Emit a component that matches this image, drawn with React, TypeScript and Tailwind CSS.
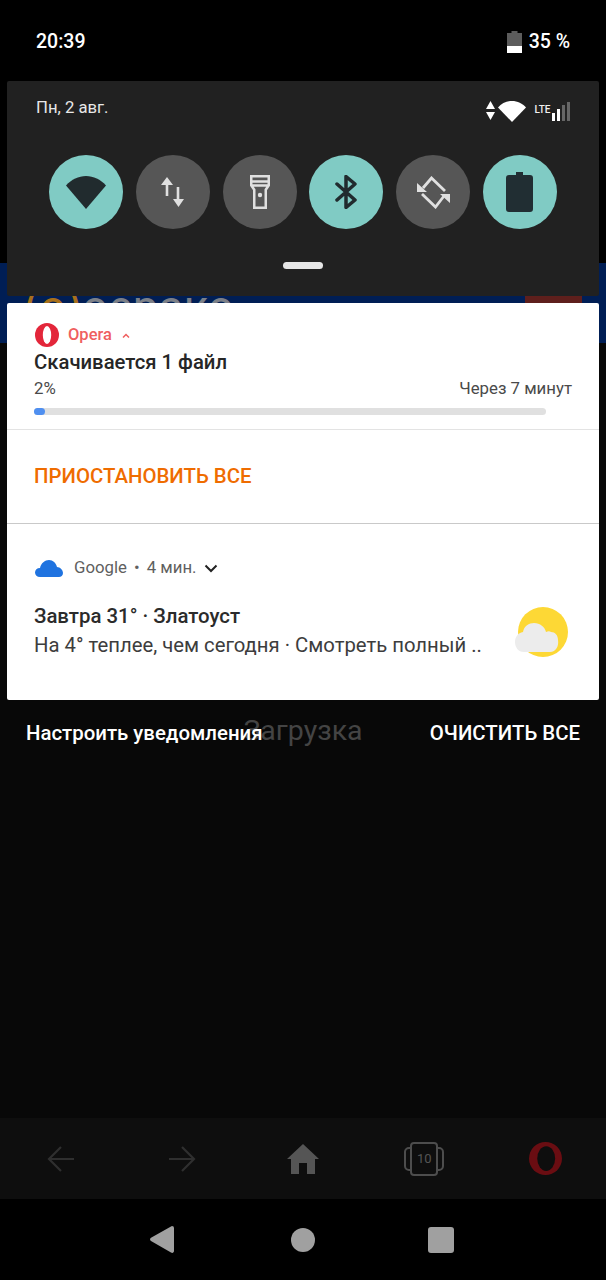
const font = { fontFamily: "Roboto, sans-serif" }

function OperaLogo({ className, color, hole, rx, cx }: { className: string; color: string; hole: string; rx: number; cx: number }) {
  return (
    <svg viewBox="0 0 24 24" className={className}>
      <ellipse cx="12" cy="12" rx="12" ry="12" fill={color} />
      <ellipse cx={cx} cy="12" rx={rx} ry="9" fill={hole} />
    </svg>
  )
}

function QuickTile({ on, children }: { on?: boolean; children: React.ReactNode }) {
  return (
    <div className={`flex h-[74px] w-[74px] items-center justify-center rounded-full ${on ? "bg-[#80cbc4]" : "bg-[#565656]"}`}>
      {children}
    </div>
  )
}

export default function App() {
  return (
    <div className="relative h-[1280px] w-[606px] overflow-hidden bg-black" style={font}>
      {/* app behind the shade */}
      <div className="absolute inset-0 flex flex-col bg-[#080808]">
        <div className="h-[263px] bg-black" />
        <div className="flex h-[80px] items-start justify-between overflow-hidden bg-[#001e55] pl-[24px] pr-[24px] pt-[14px]">
          <div className="text-[46px] leading-[60px] text-[#7c8088]">
            <span className="text-[#a8701a]">(o)</span>оерако
          </div>
          <div className="mt-[-2px] flex h-[59px] w-[57px] justify-center bg-[#5e1f1c] pt-[28px]">
            <div className="h-[20px] w-[4px] bg-[#8a6a66]" />
          </div>
        </div>
        <div className="relative flex-1">
          <div className="pt-[370px] text-center text-[28.500px] leading-[36px] text-[#444444]">Загрузка</div>
        </div>
        <div className="flex h-[81px] items-center bg-[#0e0e0e]">
          <div className="flex flex-1 justify-center">
            <svg viewBox="0 0 28 28" className="h-[28px] w-[28px] text-[#2f2f2f]" fill="none" stroke="currentColor" strokeWidth="2.2">
              <path d="M27 14H2M14 2 2 14l12 12" />
            </svg>
          </div>
          <div className="flex flex-1 justify-center">
            <svg viewBox="0 0 28 28" className="h-[28px] w-[28px] text-[#2f2f2f]" fill="none" stroke="currentColor" strokeWidth="2.2">
              <path d="M1 14h25M14 2l12 12-12 12" />
            </svg>
          </div>
          <div className="flex flex-1 justify-center">
            <svg viewBox="0 0 32 30" className="h-[30px] w-[32px] text-[#555555]" fill="currentColor">
              <path d="M16 0 32 15h-4v15h-8V19h-8v11H4V15H0z" />
            </svg>
          </div>
          <div className="flex flex-1 justify-center">
            <div className="relative flex h-[34px] w-[40px] items-center justify-center">
              <div className="absolute left-0 top-[5px] h-[24px] w-[40px] rounded-[5px] border-2 border-[#4d4d4d]" />
              <div className="relative flex h-[34px] w-[28px] items-center justify-center rounded-[4px] border-2 border-[#4d4d4d] bg-[#0e0e0e] text-[13px] text-[#555555]">10</div>
            </div>
          </div>
          <div className="flex flex-1 justify-center">
            <OperaLogo className="h-[35px] w-[33px]" color="#6a0d12" hole="#0e0e0e" rx={6.500} cx={12.500} />
          </div>
        </div>
        <div className="h-[81px] bg-black" />
      </div>

      {/* status bar */}
      <div className="relative flex h-[81px] items-center justify-between pl-[36px] pr-[36px] pt-[2px] text-white">
        <span className="text-[19.500px] font-medium">20:39</span>
        <div className="flex items-center gap-[7px]">
          <svg viewBox="0 0 15 22" className="h-[22px] w-[15px]">
            <path d="M4.500 0h6v2H15v20H0V2h4.500z" fill="#5c5c5c" />
            <path d="M0 15h15v7H0z" fill="#ffffff" />
          </svg>
          <span className="text-[19.500px] font-medium">35 %</span>
        </div>
      </div>

      {/* quick settings */}
      <div className="relative mx-[7px] h-[215px] rounded-[2px] bg-[#212121] px-[29px]">
        <div className="flex h-[52px] items-center justify-between text-[#e8e8e8]">
          <span className="mt-[2px] text-[16.700px] leading-none">Пн, 2 авг.</span>
          <div className="mt-[8px] flex items-center">
            <svg viewBox="0 0 9 20" className="h-[20px] w-[9px]" fill="#ffffff">
              <path d="M4.500 0 9 8H0zM0 11h9l-4.500 8z" />
            </svg>
            <svg viewBox="0 0 28 21" className="ml-[3px] h-[21px] w-[28px]" fill="#ffffff">
              <path d="M14 21 0 6.500C3.500 2.500 8.500 0 14 0s10.500 2.500 14 6.500z" />
            </svg>
            <span className="ml-[9px] mb-[2px] text-[10px] font-medium leading-none text-[#f0f0f0]">LTE</span>
            <div className="ml-[1px] flex h-[19px] items-end gap-[1.500px]">
              <div className="h-[8px] w-[3.500px] bg-white" />
              <div className="h-[12px] w-[3.500px] bg-white" />
              <div className="h-[16px] w-[3.500px] bg-[#666666]" />
              <div className="h-[19px] w-[3.500px] bg-[#666666]" />
            </div>
          </div>
        </div>

        <div className="mt-[22px] flex justify-between px-[13px]">
          <QuickTile on>
            <svg viewBox="0 0 40 33" className="h-[33px] w-[40px]" fill="#212b2e">
              <path d="M20 33 0 9.500C5.500 3.500 12.500 0 20 0s14.500 3.500 20 9.500z" />
            </svg>
          </QuickTile>
          <QuickTile>
            <svg viewBox="0 0 23 30" className="h-[30px] w-[23px]" fill="#e0e0e0">
              <path d="M6 0 12 8H7.300v11H4.700V8H0zM15.700 10h2.600v12H23l-5.500 8-5.500-8h3.700z" />
            </svg>
          </QuickTile>
          <QuickTile>
            <svg viewBox="0 0 20 34" className="h-[34px] w-[20px]" fill="none" stroke="#e0e0e0" strokeWidth="2.500">
              <path d="M1.250 1.250h17.500v9l-3 4.500v18h-11.500v-18l-3-4.500zM1.250 6.500h17.500M1.250 10.500h17.500" />
              <circle cx="10" cy="20" r="2.200" fill="#e0e0e0" stroke="none" />
            </svg>
          </QuickTile>
          <QuickTile on>
            <svg viewBox="0 0 22 34" className="h-[34px] w-[22px]" fill="none" stroke="#212b2e" strokeWidth="3.500" strokeLinecap="round" strokeLinejoin="round">
              <path d="M2 9 20 25 11 32.500V1.500l9 7.500L2 25" />
            </svg>
          </QuickTile>
          <QuickTile>
            <svg viewBox="0 0 33 33" className="h-[33px] w-[33px]" fill="none" stroke="#e0e0e0" strokeWidth="2.800">
              <path d="M6 12 14.500 2 28 15M5 18l13.500 13L27 20" />
              <path d="M0 16h10L0 7zM33 18H23l10 9z" fill="#e0e0e0" stroke="none" />
            </svg>
          </QuickTile>
          <QuickTile on>
            <svg viewBox="0 0 27 40" className="h-[40px] w-[27px]" fill="#212e33">
              <path d="M10 0h7v3h7a3 3 0 0 1 3 3v31a3 3 0 0 1-3 3H3a3 3 0 0 1-3-3V6a3 3 0 0 1 3-3h7z" />
            </svg>
          </QuickTile>
        </div>

        <div className="mx-auto mt-[33px] h-[7px] w-[40px] rounded-full bg-[#e6e6e6]" />
      </div>

      {/* notifications */}
      <div className="relative mx-[7px] mt-[7px] h-[397px] overflow-hidden rounded-[2px] bg-white">
        <div className="h-[127px] border-b border-[#e3e3e3] px-[27px] pt-[20px]">
          <div className="flex h-[24px] items-center">
            <OperaLogo className="ml-[1px] h-[24px] w-[24px]" color="#e3263a" hole="#ffffff" rx={4.200} cx={12} />
            <span className="ml-[9px] text-[16.500px] font-medium text-[#ef5f5f]">Opera</span>
            <svg viewBox="0 0 8 5" className="ml-[10px] h-[5px] w-[8px]" fill="none" stroke="#ef5f5f" strokeWidth="1.500">
              <path d="M1 4.500 4 1.500l3 3" />
            </svg>
          </div>
          <div className="mt-[1px] text-[20.300px] font-medium leading-[28px] text-[#262626]">Скачивается 1 файл</div>
          <div className="flex justify-between text-[16.800px] leading-[24px] text-[#4a4a4a]">
            <span>2%</span>
            <span>Через 7 минут</span>
          </div>
          <div className="mt-[8px] h-[7px] w-[512px] rounded-full bg-[#e0e0e0]">
            <div className="h-[7px] w-[11px] rounded-full bg-[#4f8ff0]" />
          </div>
        </div>
        <div className="flex h-[94px] items-center border-b border-[#c9c9c9] px-[27px]">
          <span className="text-[20.400px] font-medium text-[#ef6c00]">ПРИОСТАНОВИТЬ ВСЕ</span>
        </div>
        <div className="px-[27px] pt-[34px]">
          <div className="flex h-[20px] items-center text-[16.800px] text-[#5f5f5f]">
            <svg viewBox="0 0 28 17" className="ml-[1px] h-[17px] w-[28px]" fill="#1f73e0">
              <path d="M5 17C2 17 0 15 0 12.500 0 10 2 8 5 8 6 3 10 0 14 0c4 0 7 3 8 7 3 0 6 3 6 6 0 2.500-2 4-4 4z" />
            </svg>
            <span className="ml-[11px]">Google</span>
            <span className="ml-[7px]">•</span>
            <span className="ml-[7px]">4 мин.</span>
            <svg viewBox="0 0 14 9" className="ml-[8px] h-[9px] w-[14px]" fill="none" stroke="#222222" strokeWidth="2">
              <path d="m1.500 1.500 5.500 5.500 5.500-5.500" />
            </svg>
          </div>
          <div className="flex items-start justify-between">
            <div>
              <div className="mt-[24px] text-[20.400px] font-medium leading-[28px] text-[#2b2b2b]">Завтра 31° · Златоуст</div>
              <div className="mt-[1px] text-[20.300px] leading-[28px] text-[#3d3d3d]">На 4° теплее, чем сегодня · Смотреть полный ..</div>
            </div>
            <svg viewBox="0 0 54 52" className="mr-[3px] mt-[28px] h-[52px] w-[54px]">
              <circle cx="28" cy="26" r="25" fill="#fdd835" />
              <path d="M9 46C3 46 0 41 0 36c0-5 3-9 8-10 1-6 6-9 11-9 6 0 11 4 12 9 2-1 4-1 5 0 4 0 7 3 7 8 1 6-2 12-8 12z" fill="#ececec" />
            </svg>
          </div>
        </div>
      </div>

      {/* shade footer */}
      <div className="relative flex h-[66px] items-center justify-between pl-[26px] pr-[26px] text-[20.400px] font-medium text-white">
        <span>Настроить уведомления</span>
        <span>ОЧИСТИТЬ ВСЕ</span>
      </div>

      {/* system nav */}
      <div className="absolute inset-x-0 bottom-0 flex h-[81px] items-center justify-center pr-[2px]">
        <svg viewBox="0 0 24 27" className="h-[27px] w-[24px]" fill="#a0a0a0">
          <path d="M22 0a2 2 0 0 1 2 2v23c0 1.500-1.500 2.500-3 1.500L1 15c-1.300-.8-1.300-2.500 0-3.300L21 .5c.3-.3.6-.5 1-.5z" />
        </svg>
        <div className="ml-[117px] h-[24px] w-[24px] rounded-full bg-[#a0a0a0]" />
        <div className="ml-[113px] h-[26px] w-[26px] rounded-[3px] bg-[#a0a0a0]" />
      </div>
    </div>
  )
}
